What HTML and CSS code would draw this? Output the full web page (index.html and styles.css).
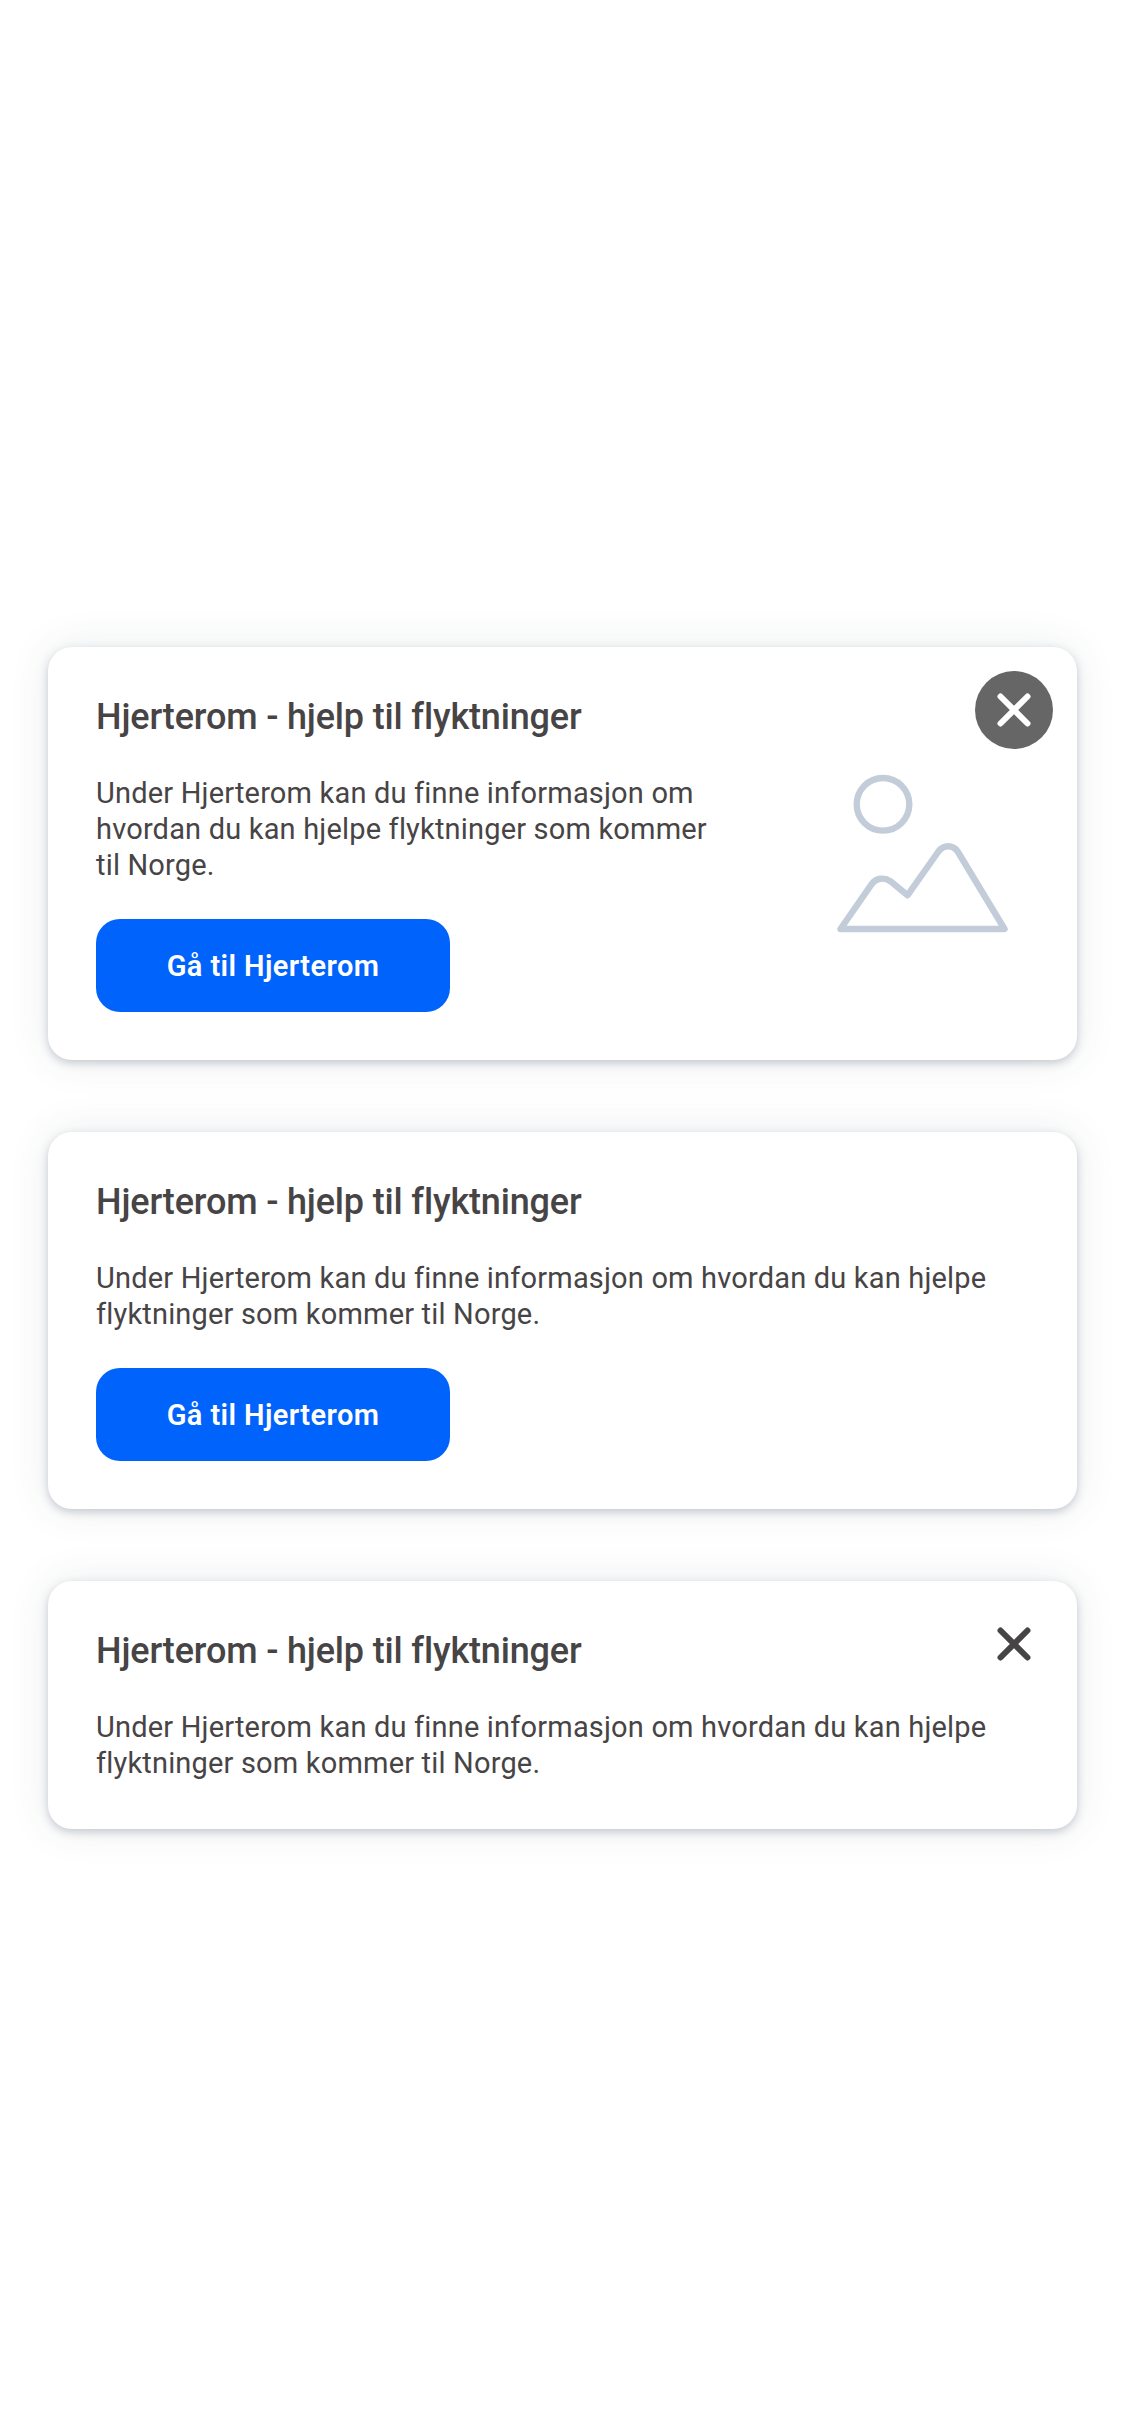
FILE: index.html
```html
<!DOCTYPE html>
<html lang="nb">
<head>
<meta charset="utf-8">
<title>Hjerterom</title>
<link rel="stylesheet" href="styles.css">
</head>
<body>
<main class="page">
  <article class="card">
    <div class="content">
      <h2 class="title">Hjerterom - hjelp til flyktninger</h2>
      <p class="text"><span class="line">Under Hjerterom kan du finne informasjon om</span> <span class="line">hvordan du kan hjelpe flyktninger som kommer</span> <span class="line">til Norge.</span></p>
      <button class="action" type="button">Gå til Hjerterom</button>
    </div>
    <svg class="picture" viewBox="0 0 213 213" aria-hidden="true">
      <circle cx="67" cy="57.3" r="26.3"/>
      <path d="M24.500 182 55.300 137.600C60 130.800 68.500 129.900 74.500 134.300L91.500 148.300 122.400 104.500C127.800 97.400 136.800 97.600 141.700 104.500L188.500 182Z"/>
    </svg>
    <button class="close filled" type="button" aria-label="Lukk">
      <svg class="cross" viewBox="0 0 36 36"><path d="M4.500 4.500 31.500 31.500M31.500 4.500 4.500 31.500"/></svg>
    </button>
  </article>

  <article class="card">
    <div class="content">
      <h2 class="title">Hjerterom - hjelp til flyktninger</h2>
      <p class="text"><span class="line">Under Hjerterom kan du finne informasjon om hvordan du kan hjelpe</span> <span class="line">flyktninger som kommer til Norge.</span></p>
      <button class="action" type="button">Gå til Hjerterom</button>
    </div>
  </article>

  <article class="card">
    <div class="content">
      <h2 class="title">Hjerterom - hjelp til flyktninger</h2>
      <p class="text"><span class="line">Under Hjerterom kan du finne informasjon om hvordan du kan hjelpe</span> <span class="line">flyktninger som kommer til Norge.</span></p>
    </div>
    <button class="close" type="button" aria-label="Lukk">
      <svg class="cross" viewBox="0 0 36 36"><path d="M4.500 4.500 31.500 31.500M31.500 4.500 4.500 31.500"/></svg>
    </button>
  </article>
</main>
</body>
</html>
```
FILE: styles.css
```css
* { box-sizing: border-box; }

body {
  margin: 0;
  background: #fff;
  color: #474445;
  font-family: Roboto, "Noto Sans", sans-serif;
}

.page {
  min-height: 2436px;
  padding: 40px 48px 0;
  display: flex;
  flex-direction: column;
  justify-content: center;
  gap: 72px;
}

.card {
  position: relative;
  display: flex;
  align-items: center;
  padding: 48px;
  border-radius: 24px;
  background: #fff;
  box-shadow: 0 3px 8px rgba(50, 68, 92, .25), 0 0 40px rgba(50, 68, 92, .1);
}

.content { flex: 1; }

.title {
  margin: 0 0 36px;
  font-size: 36px;
  line-height: 44px;
  font-weight: 500;
  letter-spacing: -.16px;
}

.text {
  margin: 0;
  font-size: 29px;
  line-height: 36px;
  letter-spacing: .18px;
}

.line {
  display: block;
  white-space: nowrap;
}

.action {
  display: flex;
  align-items: center;
  justify-content: center;
  width: 354px;
  height: 93px;
  margin-top: 36px;
  padding: 0;
  border: 0;
  border-radius: 24px;
  background: #0063fb;
  color: #fff;
  font: 600 29px/36px Roboto, "Noto Sans", sans-serif;
  letter-spacing: .4px;
}

.picture {
  width: 213px;
  height: 213px;
  flex: none;
  fill: none;
  stroke: #c3ccd9;
  stroke-width: 6.4;
  stroke-linejoin: round;
}

.close {
  position: absolute;
  top: 24px;
  right: 24px;
  display: grid;
  place-items: center;
  width: 78px;
  height: 78px;
  padding: 0;
  border: 0;
  border-radius: 50%;
  background: transparent;
  color: #474445;
}

.close.filled {
  background: #666;
  color: #fff;
}

.cross {
  width: 36px;
  height: 36px;
  fill: none;
  stroke: currentColor;
  stroke-width: 6;
  stroke-linecap: round;
}
```
